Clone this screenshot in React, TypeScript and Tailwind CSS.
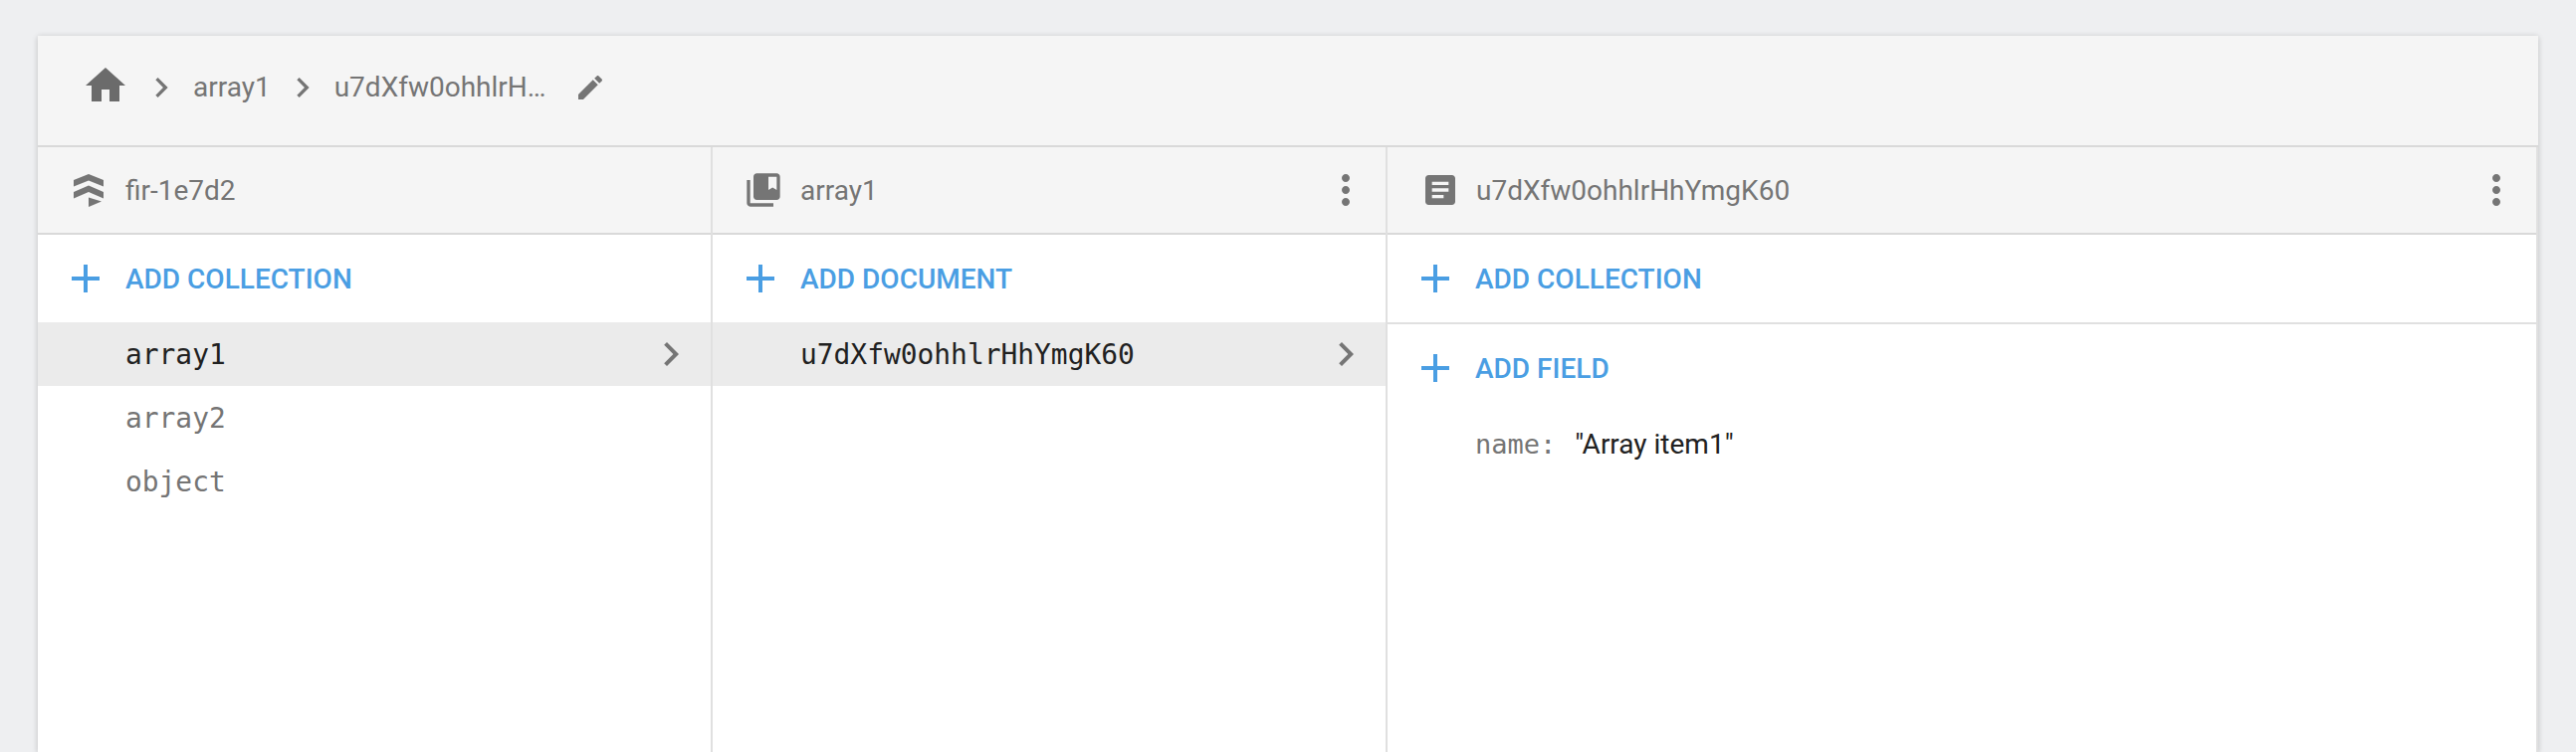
const PATHS = {
  home: 'M10 20v-6h4v6h5v-8h3L12 3 2 12h3v8z',
  chevron: 'M10 6L8.59 7.41 13.17 12l-4.58 4.59L10 18l6-6z',
  edit: 'M3 17.25V21h3.75L17.81 9.94l-3.75-3.75L3 17.25zM20.71 7.04c.39-.39.39-1.02 0-1.41l-2.34-2.34c-.39-.39-1.02-.39-1.41 0l-1.83 1.83 3.75 3.75 1.83-1.83z',
  plus: 'M19 13h-6v6h-2v-6H5v-2h6V5h2v6h6v2z',
  more: 'M12 8c1.1 0 2-.9 2-2s-.9-2-2-2-2 .9-2 2 .9 2 2 2zm0 2c-1.1 0-2 .9-2 2s.9 2 2 2 2-.9 2-2-.9-2-2-2zm0 6c-1.1 0-2 .9-2 2s.9 2 2 2 2-.9 2-2-.9-2-2-2z',
  collection: 'M4 6H2v14c0 1.1.9 2 2 2h14v-2H4V6zm16-4H8c-1.1 0-2 .9-2 2v12c0 1.1.9 2 2 2h12c1.1 0 2-.9 2-2V4c0-1.1-.9-2-2-2zm0 10l-2.5-1.5L15 12V4h5v8z',
  doc: 'M19 3H5c-1.1 0-2 .9-2 2v14c0 1.1.9 2 2 2h14c1.1 0 2-.9 2-2V5c0-1.1-.9-2-2-2zm-5 14H7v-2h7v2zm3-4H7v-2h10v2zm0-4H7V7h10v2z',
}

function Icon({ d, className }: { d: string; className: string }) {
  return (
    <svg viewBox="0 0 24 24" fill="currentColor" className={className}>
      <path d={d} />
    </svg>
  )
}

function ProjectIcon() {
  return (
    <svg viewBox="0 0 30 33" fill="currentColor" className="w-[30px] h-[33px] ml-[36px] mr-[22px] mt-[1px] shrink-0">
      <path d="M15 0L30 6V12.5L15 6.5L0 12.5V6z" />
      <path d="M15 11.5L30 18V24.5L15 18L0 24.5V18z" />
      <path d="M15 23.5L28 27.5L15 33z" />
    </svg>
  )
}

function ColHeader({ icon, title, menu }: { icon: React.ReactNode; title: string; menu?: boolean }) {
  return (
    <div className="h-[88px] bg-[#f5f5f5] border-b-2 border-[#d9d9d9] flex items-center text-[#757575]">
      {icon}
      <span className="flex-1 text-[28px] pt-[2px]">{title}</span>
      {menu && <Icon d={PATHS.more} className="w-[48px] h-[48px] mr-[16px]" />}
    </div>
  )
}

function AddRow({ label, border }: { label: string; border?: boolean }) {
  return (
    <div className={`flex items-center text-[#4a9ee3] ${border ? 'h-[90px] border-b-2 border-[#e0e0e0]' : 'h-[88px]'}`}>
      <Icon d={PATHS.plus} className="w-[48px] h-[48px] ml-[24px] mr-[16px]" />
      <span className="text-[28px] font-medium pt-[1px]">{label}</span>
    </div>
  )
}

function ListRow({ label, selected }: { label: string; selected?: boolean }) {
  return (
    <div className={`h-[64px] flex items-center pl-[88px] pr-[16px] ${selected ? 'bg-[#ebebeb] text-[#212121]' : 'text-[#757575]'}`}>
      <span className="flex-1 font-['DejaVu_Sans_Mono',monospace] text-[27.9px] pt-[2px]">{label}</span>
      {selected && <Icon d={PATHS.chevron} className="w-[48px] h-[48px] text-[#757575]" />}
    </div>
  )
}

export default function App() {
  return (
    <div className="h-[756px] overflow-hidden bg-[#eeeff1] pt-[36px] pl-[38px] pr-[38px] font-['Roboto',sans-serif]">
      <div className="h-[720px] bg-white shadow-[0_1px_6px_rgba(0,0,0,0.2)] flex flex-col">
        {/* breadcrumb */}
        <div className="h-[112px] shrink-0 bg-[#f5f5f5] border-b-2 border-[#d9d9d9] flex items-start text-[#757575]">
          <Icon d={PATHS.home} className="w-[48px] h-[48px] ml-[44px] mt-[26px] text-[#6b6b6b]" />
          <div className="flex items-center h-[40px] mt-[32px] ml-[12px] text-[28px]">
            <Icon d={PATHS.chevron} className="w-[40px] h-[40px]" />
            <span className="ml-[12px] mr-[12px]">array1</span>
            <Icon d={PATHS.chevron} className="w-[40px] h-[40px]" />
            <span className="ml-[12px] w-[241px]">u7dXfw0ohhlrH…</span>
            <Icon d={PATHS.edit} className="w-[32px] h-[32px]" />
          </div>
        </div>

        <div className="flex flex-1">
          {/* root column */}
          <div className="w-[678px] shrink-0 border-r-2 border-[#e0e0e0]">
            <ColHeader icon={<ProjectIcon />} title="fir-1e7d2" />
            <AddRow label="ADD COLLECTION" />
            <ListRow label="array1" selected />
            <ListRow label="array2" />
            <ListRow label="object" />
          </div>

          {/* collection column */}
          <div className="w-[678px] shrink-0 border-r-2 border-[#e0e0e0]">
            <ColHeader
              icon={<Icon d={PATHS.collection} className="w-[40px] h-[40px] ml-[31px] mr-[17px] shrink-0" />}
              title="array1"
              menu
            />
            <AddRow label="ADD DOCUMENT" />
            <ListRow label="u7dXfw0ohhlrHhYmgK60" selected />
          </div>

          {/* document column */}
          <div className="flex-1 border-r-2 border-[#e0e0e0]">
            <ColHeader
              icon={<Icon d={PATHS.doc} className="w-[40px] h-[40px] ml-[33px] mr-[16px] shrink-0" />}
              title="u7dXfw0ohhlrHhYmgK60"
              menu
            />
            <AddRow label="ADD COLLECTION" border />
            <AddRow label="ADD FIELD" />
            <div className="flex items-center h-[66px] pl-[88px] text-[28px]">
              <span className="font-['DejaVu_Sans_Mono',monospace] text-[#757575] text-[27px]">name:</span>
              <span className="ml-[19px] text-[#212121]">"Array item1"</span>
            </div>
          </div>
        </div>
      </div>
    </div>
  )
}
